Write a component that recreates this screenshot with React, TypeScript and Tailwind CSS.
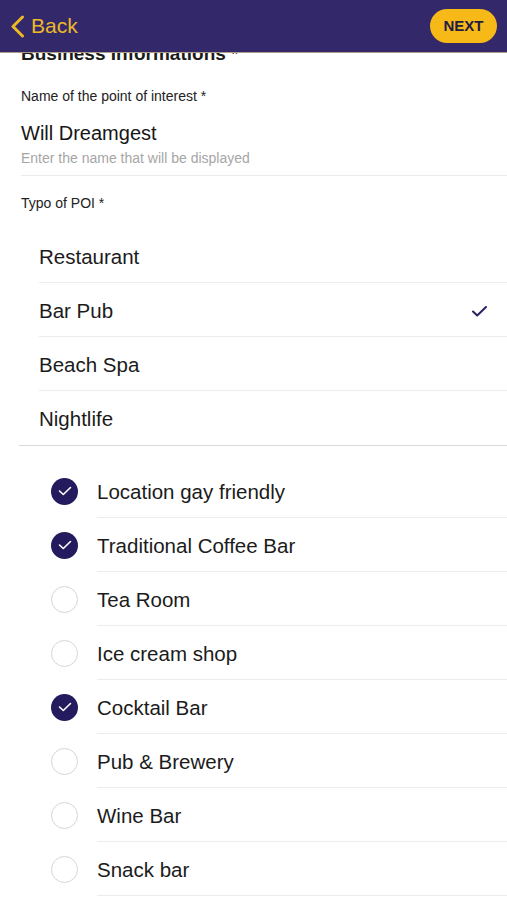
import React from 'react';

const poiTypes = [
    { label: 'Restaurant', selected: false },
    { label: 'Bar Pub', selected: true },
    { label: 'Beach Spa', selected: false },
    { label: 'Nightlife', selected: false },
];

const features = [
    { label: 'Location gay friendly', checked: true },
    { label: 'Traditional Coffee Bar', checked: true },
    { label: 'Tea Room', checked: false },
    { label: 'Ice cream shop', checked: false },
    { label: 'Cocktail Bar', checked: true },
    { label: 'Pub & Brewery', checked: false },
    { label: 'Wine Bar', checked: false },
    { label: 'Snack bar', checked: false },
];

const Header = () => (
    <div className="relative z-10 flex h-[53px] items-center justify-between border-b border-[#b09a86] bg-[#33296a] pl-[10px] pr-[10px]">
        <button className="flex items-center gap-[6px] text-[21px] text-[#ecb827]">
            <svg width="15" height="23" viewBox="0 0 15 23" fill="none">
                <path d="M12.5 2 L3 11.5 L12.5 21" stroke="#ecb827" strokeWidth="3" strokeLinecap="round" strokeLinejoin="round" />
            </svg>
            <span>Back</span>
        </button>
        <button className="flex h-[34px] w-[67px] items-center justify-center rounded-full bg-[#f6b917] text-[15px] font-bold text-[#221c45]">
            NEXT
        </button>
    </div>
);

const Check = () => (
    <svg width="15" height="11" viewBox="0 0 15 11" fill="none">
        <path d="M1 5.5 L5.2 9.5 L14 1" stroke="#2a2262" strokeWidth="2" strokeLinecap="round" strokeLinejoin="round" />
    </svg>
);

const Circle = ({ checked }: { checked: boolean }) =>
    checked ? (
        <div className="flex h-[27px] w-[27px] items-center justify-center rounded-full bg-[#241b5e]">
            <svg width="14" height="10" viewBox="0 0 14 10" fill="none">
                <path d="M1.5 5 L5.3 8.5 L12.5 1.5" stroke="white" strokeWidth="1.6" strokeLinecap="round" strokeLinejoin="round" />
            </svg>
        </div>
    ) : (
        <div className="h-[27px] w-[27px] rounded-full border border-[#d6d6d6] bg-white" />
    );

export default function App() {
    return (
        <div className="min-h-[900px] bg-white font-['Liberation_Sans',Arial,sans-serif] text-[#1b1b1b]">
            <Header />

            <div className="-mt-[11px]">
                <h2 className="pl-[21px] text-[19px] font-bold leading-[24px]">Business Informations *</h2>

                <div className="mt-[20px] pl-[21px]">
                    <p className="text-[14px] leading-[20px] text-[#222]">Name of the point of interest *</p>
                    <div className="mt-[15px] border-b border-[#ebebeb] pb-[7px]">
                        <p className="text-[20px] leading-[24px] text-[#161616]">Will Dreamgest</p>
                        <p className="mt-[3px] text-[14px] leading-[20px] text-[#a6a6a6]">Enter the name that will be displayed</p>
                    </div>
                    <p className="mt-[17px] text-[14px] leading-[20px] text-[#222]">Typo of POI *</p>
                </div>

                <ul className="ml-[19px] mt-[16px] border-b border-[#d9d9d9]">
                    {poiTypes.map((t, i) => (
                        <li key={t.label} className="pl-[20px]">
                            <div
                                className={
                                    'flex h-[54px] items-center justify-between pr-[20px] pt-[3px] text-[20.5px] ' +
                                    (i < poiTypes.length - 1 ? 'border-b border-[#ececec]' : '')
                                }
                            >
                                <span>{t.label}</span>
                                {t.selected && <Check />}
                            </div>
                        </li>
                    ))}
                </ul>

                <ul className="mt-[18px]">
                    {features.map((f) => (
                        <li key={f.label} className="flex items-center pl-[51px]">
                            <Circle checked={f.checked} />
                            <div className="ml-[19px] flex h-[54px] flex-1 items-center border-b border-[#ececec] pt-[3px] text-[20.5px]">
                                {f.label}
                            </div>
                        </li>
                    ))}
                </ul>
            </div>
        </div>
    );
}
